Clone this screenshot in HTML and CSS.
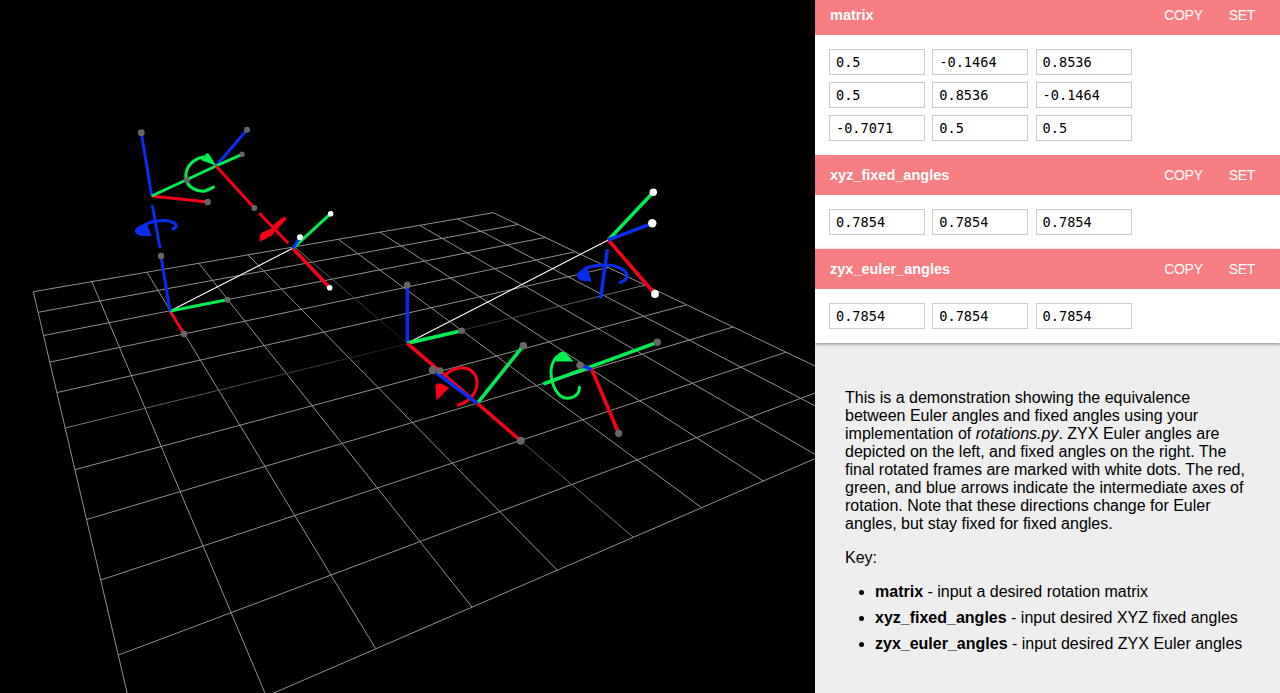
FILE: index.html
```html
<!DOCTYPE html>
<html lang="en">
<head>
<meta charset="utf-8">
<title>Rotations</title>
<link rel="stylesheet" href="styles.css">
</head>
<body>
<main class="app">
  <section class="viewer">
    <svg class="scene" width="815" height="693" viewBox="0 0 815 693">
      <defs>
        <linearGradient id="centerV" gradientUnits="userSpaceOnUse" x1="65.2" y1="428" x2="645.3" y2="285.1">
          <stop class="c-end" offset="0"/><stop class="c-mid" offset=".324"/><stop class="c-zero" offset=".59"/><stop class="c-mid" offset=".812"/><stop class="c-end" offset="1"/>
        </linearGradient>
        <linearGradient id="centerU" gradientUnits="userSpaceOnUse" x1="294.4" y1="246.9" x2="633.4" y2="537.3">
          <stop class="c-end" offset="0"/><stop class="c-mid" offset=".143"/><stop class="c-zero" offset=".333"/><stop class="c-mid" offset=".6"/><stop class="c-end" offset="1"/>
        </linearGradient>
      </defs>
      <g class="grid">
        <line x1="33.3" y1="291.7" x2="493.3" y2="212.7"/>
        <line x1="38.1" y1="312.3" x2="518.1" y2="224.5"/>
        <line x1="43.6" y1="335.5" x2="545.3" y2="237.5"/>
        <line x1="49.8" y1="362.1" x2="575.2" y2="251.8"/>
        <line x1="56.9" y1="392.6" x2="608.4" y2="267.6"/>
        <line x1="74.9" y1="469.7" x2="686.6" y2="304.8"/>
        <line x1="86.6" y1="519.5" x2="733.1" y2="327"/>
        <line x1="100.7" y1="580" x2="786" y2="352.2"/>
        <line x1="118.3" y1="655.1" x2="846.6" y2="381.1"/>
        <line x1="140.6" y1="750.7" x2="916.8" y2="414.5"/>
        <line x1="33.3" y1="291.7" x2="140.6" y2="750.7"/>
        <line x1="91.8" y1="281.6" x2="266.3" y2="696.3"/>
        <line x1="146.9" y1="272.2" x2="375.8" y2="648.8"/>
        <line x1="198.9" y1="263.3" x2="472.1" y2="607.2"/>
        <line x1="247.9" y1="254.8" x2="557.3" y2="570.2"/>
        <line x1="338.3" y1="239.3" x2="701.7" y2="507.7"/>
        <line x1="380" y1="232.2" x2="763.3" y2="481"/>
        <line x1="419.7" y1="225.3" x2="819.2" y2="456.8"/>
        <line x1="457.4" y1="218.9" x2="870.2" y2="434.7"/>
        <line x1="493.3" y1="212.7" x2="916.8" y2="414.5"/>
        <line class="center-v" x1="65.2" y1="428" x2="645.3" y2="285.1"/>
        <line class="center-u" x1="294.4" y1="246.9" x2="633.4" y2="537.3"/>
      </g>

      <!-- Euler frames (left) -->
      <line class="white-line" x1="170" y1="311" x2="292.7" y2="248.3"/>
      <line class="axis red thin" x1="170" y1="311" x2="184" y2="334"/>
      <line class="axis green thin" x1="170" y1="311" x2="227.3" y2="299.7"/>
      <line class="axis blue thin" x1="170" y1="311" x2="161" y2="256"/>
      <line class="axis blue thin" x1="152.3" y1="205" x2="160" y2="248.3"/>
      <path class="arc blue-arc" d="M143,226 C150,221 165,219 172,222 C177,224 178,227 173,229"/>
      <path class="cone blue-fill" d="M151.5,236 L141,236 Q134,234 135,230 Q137,225 147,224 Z"/>
      <line class="axis red thin" x1="151.7" y1="196" x2="207.7" y2="202"/>
      <line class="axis blue thin" x1="151.7" y1="196" x2="141.3" y2="132.7"/>
      <line class="axis green thin" x1="151.7" y1="196" x2="216" y2="166"/>
      <path class="arc green-arc" d="M203,157 C190,160 185,170 186,178 C187,188 198,192 205,191 C208,190 211,189 213.5,187"/>
      <path class="cone green-fill" d="M216.5,166 L201,160 L205,155 Q207,152 209,154 Z"/>
      <line class="axis blue thin" x1="216" y1="166" x2="247" y2="129.7"/>
      <line class="axis green thin" x1="216" y1="166" x2="242" y2="154.3"/>
      <line class="axis red thin" x1="216" y1="166" x2="254.3" y2="208"/>
      <line class="axis red thin" x1="259.3" y1="213.3" x2="288.3" y2="243.3"/>
      <path class="arc red-arc" d="M270.5,235 C274,230 282,222 285.5,217.5 C284,219 278,222 275,226"/>
      <path class="cone red-fill" d="M259.5,241.5 L260,235 Q261,232 266,231 L277,226 L270,236 Q265,240 259.5,241.5 Z"/>
      <line class="axis red" x1="292.7" y1="248.3" x2="329.7" y2="287.7"/>
      <line class="axis green thin" x1="292.7" y1="248.3" x2="330.7" y2="213.7"/>
      <line class="axis blue thin" x1="292.7" y1="248.3" x2="300" y2="237.3"/>

      <!-- Fixed frames (right) -->
      <line class="white-line" x1="407.3" y1="343.3" x2="608.3" y2="240"/>
      <line class="axis blue" x1="407.3" y1="343.3" x2="407.3" y2="285"/>
      <line class="axis green" x1="407.3" y1="343.3" x2="461.7" y2="330.7"/>
      <line class="axis red" x1="407.3" y1="343.3" x2="477.3" y2="403.3"/>
      <path class="arc red-arc" d="M458,405 C470,402 477,392 477,383 C477,372 468,367 460,368 C453,369 448,372 444,376"/>
      <path class="cone red-fill" d="M436.5,400.5 L435.5,385 Q439,381 449,388 Z"/>
      <line class="axis green" x1="477.3" y1="403.3" x2="523.3" y2="345.7"/>
      <line class="axis red" x1="477.3" y1="403.3" x2="520.7" y2="440.7"/>
      <line class="axis blue" x1="477.3" y1="403.3" x2="432.7" y2="370"/>
      <line class="axis green" x1="543.3" y1="384" x2="657.3" y2="342.3"/>
      <path class="arc green-arc" d="M556.7,356.7 C552,362 551,367 551,372 C551,385 558,398 567,398.3 C575,398 580,393 579.3,387.3"/>
      <path class="cone green-fill" d="M573.5,361.5 L556,361.5 Q555,361 556,358 Q558,352 562,351.7 Q565,351.5 567,354 Z"/>
      <line class="axis red" x1="591.7" y1="369.3" x2="618.7" y2="433.3"/>
      <line class="axis blue" x1="591.7" y1="369.3" x2="580" y2="365.3"/>
      <line class="axis green" x1="608.3" y1="240" x2="653.3" y2="192.3"/>
      <line class="axis red" x1="608.3" y1="240" x2="655" y2="294"/>
      <line class="axis blue" x1="608.3" y1="240" x2="652.3" y2="223.3"/>
      <line class="axis blue" x1="607.3" y1="249.3" x2="600.7" y2="298.3"/>
      <path class="arc blue-arc" d="M586,268 C595,265 601,265 607,265 C616,265 624,269 627,274 C628,278 625,281 620,282.5"/>
      <path class="cone blue-fill" d="M591.7,281.8 L581,280.5 Q576,278 577,274.5 Q579,270 587,267 Z"/>

      <g class="dots">
        <circle cx="161" cy="256" r="3.2"/>
        <circle cx="184" cy="334" r="3.2"/>
        <circle cx="227.3" cy="299.7" r="3"/>
        <circle cx="141.3" cy="132.7" r="3.4"/>
        <circle cx="207.7" cy="202" r="3.2"/>
        <circle cx="186.7" cy="180.3" r="3"/>
        <circle cx="247" cy="129.7" r="3"/>
        <circle cx="242" cy="154.3" r="2.7"/>
        <circle cx="254.3" cy="208" r="2.9"/>
        <circle cx="407.3" cy="285" r="3.4"/>
        <circle cx="461.7" cy="330.7" r="3.2"/>
        <circle cx="440" cy="370.7" r="3.4"/>
        <circle cx="432.7" cy="370" r="3.9"/>
        <circle cx="523.3" cy="345.7" r="3.8"/>
        <circle cx="520.7" cy="440.7" r="4"/>
        <circle cx="580" cy="365.3" r="3.7"/>
        <circle cx="657.3" cy="342.3" r="3.7"/>
        <circle cx="618.7" cy="433.3" r="3.6"/>
      </g>
      <g class="dots-white">
        <circle cx="329.7" cy="287.7" r="2.8"/>
        <circle cx="330.7" cy="213.7" r="2.8"/>
        <circle cx="300" cy="237.3" r="3"/>
        <circle cx="653.3" cy="192.3" r="3.7"/>
        <circle cx="652.3" cy="223.3" r="4.2"/>
        <circle cx="655" cy="294" r="3.9"/>
      </g>
    </svg>
  </section>

  <aside class="panel">
    <div class="control">
      <header class="control-head">
        <h2 class="control-title">matrix</h2>
        <button class="control-btn" type="button">COPY</button>
        <button class="control-btn" type="button">SET</button>
      </header>
      <div class="control-body">
        <input class="cell" value="0.5"><input class="cell" value="-0.1464"><input class="cell" value="0.8536">
        <input class="cell" value="0.5"><input class="cell" value="0.8536"><input class="cell" value="-0.1464">
        <input class="cell" value="-0.7071"><input class="cell" value="0.5"><input class="cell" value="0.5">
      </div>
    </div>
    <div class="control">
      <header class="control-head">
        <h2 class="control-title">xyz_fixed_angles</h2>
        <button class="control-btn" type="button">COPY</button>
        <button class="control-btn" type="button">SET</button>
      </header>
      <div class="control-body">
        <input class="cell" value="0.7854"><input class="cell" value="0.7854"><input class="cell" value="0.7854">
      </div>
    </div>
    <div class="control control-last">
      <header class="control-head">
        <h2 class="control-title">zyx_euler_angles</h2>
        <button class="control-btn" type="button">COPY</button>
        <button class="control-btn" type="button">SET</button>
      </header>
      <div class="control-body">
        <input class="cell" value="0.7854"><input class="cell" value="0.7854"><input class="cell" value="0.7854">
      </div>
    </div>
    <div class="notes">
      <p class="notes-text">This is a demonstration showing the equivalence between Euler angles and fixed angles using your implementation of <em>rotations.py</em>. ZYX Euler angles are depicted on the left, and fixed angles on the right. The final rotated frames are marked with white dots. The red, green, and blue arrows indicate the intermediate axes of rotation. Note that these directions change for Euler angles, but stay fixed for fixed angles.</p>
      <p class="notes-text">Key:</p>
      <ul class="notes-list">
        <li><strong>matrix</strong> - input a desired rotation matrix</li>
        <li><strong>xyz_fixed_angles</strong> - input desired XYZ fixed angles</li>
        <li><strong>zyx_euler_angles</strong> - input desired ZYX Euler angles</li>
      </ul>
    </div>
  </aside>
</main>
</body>
</html>
```
FILE: styles.css
```css
* { box-sizing: border-box; }
html, body { margin: 0; height: 100%; overflow: hidden; }
body { font-family: "Liberation Sans", Arial, sans-serif; color: #000; background: #000; }

.app { display: flex; height: 693px; }
.viewer { flex: 0 0 815px; background: #000; overflow: hidden; }
.scene { display: block; }

.grid line { stroke: #909090; stroke-width: 1; }
.grid .center-v { stroke: url(#centerV); }
.grid .center-u { stroke: url(#centerU); }
.c-end { stop-color: #7a7a7a; }
.c-mid { stop-color: #4a4a4a; }
.c-zero { stop-color: #1a1a1a; }

.white-line { stroke: #fff; stroke-width: 1.1; }
.axis { stroke-width: 3.5; fill: none; }
.axis.thin { stroke-width: 3; }
.red { stroke: #f80018; }
.green { stroke: #00ee50; }
.blue { stroke: #0a2cf0; }
.arc { fill: none; stroke-width: 3; stroke-linecap: round; }
.red-arc { stroke: #f80018; }
.green-arc { stroke: #00ee50; }
.blue-arc { stroke: #0a2cf0; }
.red-fill { fill: #f80018; }
.green-fill { fill: #00ee50; }
.blue-fill { fill: #0a2cf0; }
.dots circle { fill: #666; }
.dots-white circle { fill: #fff; }

.panel { flex: 1 1 auto; min-width: 0; background: #eee; margin-top: -5px; height: 698px; overflow: hidden; }
.control { background: #fff; }
.control-last { box-shadow: 0 1px 3px rgba(0, 0, 0, .45); position: relative; }
.control-head { display: flex; align-items: center; height: 40px; padding: 0 25px 0 15px; background: #f67d82; color: #fff; }
.control-title { flex: 1 1 auto; margin: 0; font-size: 14.5px; font-weight: 700; }
.control-btn { margin: 0 0 0 26px; padding: 0; border: 0; background: none; color: #fff; font: 14px "Liberation Sans", Arial, sans-serif; letter-spacing: -.3px; }
.control-body { display: grid; grid-template-columns: repeat(3, 96px); column-gap: 7.3px; row-gap: 7px; padding: 14px; }
.cell { width: 96px; height: 26px; padding: 0 6px; border: 1px solid #ccc; border-radius: 0; background: #fff; color: #000; font: 13.6px "DejaVu Sans Mono", monospace; outline: 0; }

.notes { padding: 46px 30px 0; font-size: 16px; line-height: 18px; }
.notes-text { margin: 0 0 16px; }
.notes-list { margin: 0; padding: 0 0 0 30px; }
.notes-list li { margin-bottom: 8px; }
```
